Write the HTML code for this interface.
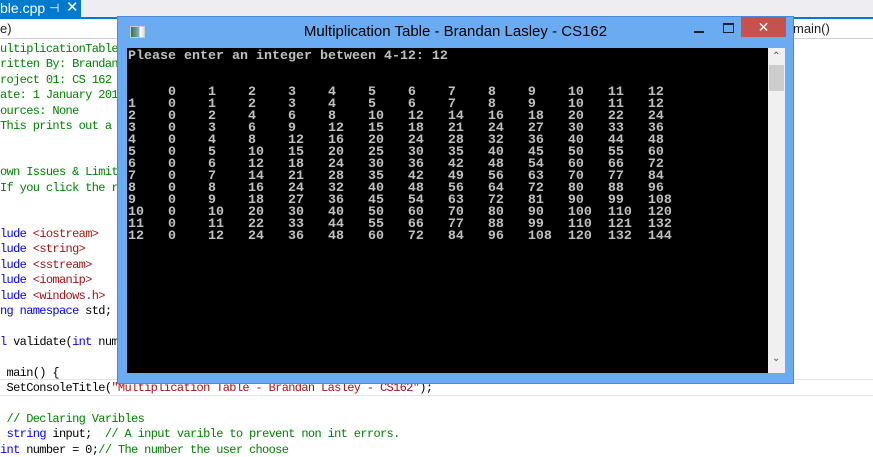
<!DOCTYPE html>
<html><head><meta charset="utf-8"><style>
*{margin:0;padding:0}
body{width:873px;height:449px;overflow:hidden;background:#fff;position:relative;font-family:"Liberation Sans",sans-serif}
.top{position:absolute;left:0;top:0;width:873px;height:17px;background:#eeeef2}
.tab{position:absolute;left:0;top:0;width:81px;height:18px;background:#007acc;color:#fff;font-size:14px;line-height:17px}
.bl{position:absolute;left:0;top:17px;width:873px;height:2px;background:#007acc}
.dd{position:absolute;top:19px;height:19px;border-bottom:1px solid #ccced8;font-size:13px;line-height:19px;color:#1e1e1e}
.code{position:absolute;left:0;font-family:"Liberation Mono",monospace;font-size:12px;letter-spacing:-0.65px;white-space:pre;line-height:14px;color:#000}
.g{color:#008000}.b{color:#0000ff}.r{color:#a31515}
.win{position:absolute;left:117px;top:16px;width:675px;height:366px;background:#6aabf2;border:1px solid #4a8ad8}
.con{position:absolute;left:9px;top:31px;width:641px;height:325px;background:#000;overflow:hidden}
.con pre{font-family:"Liberation Mono",monospace;font-weight:bold;font-size:13.33px;line-height:12px;color:#c0c0c0;margin:3px 0 0 1px}
.sb{position:absolute;left:650px;top:31px;width:17px;height:325px;background:#f0f0f0}
</style></head><body>
<div class="top"></div>
<div class="tab"><span style="position:absolute;left:0;top:0">ble.cpp</span><span style="position:absolute;left:49px;top:0;font-size:12px">⊣</span><span style="position:absolute;left:66px;top:-1px;font-size:15px">✕</span></div>
<div class="bl"></div>
<div class="dd" style="left:0;width:117px;border-right:1px solid #ccced8">e)</div>
<div class="dd" style="left:793px;width:80px;border-top:1px solid #007acc;top:18px">main()</div>

<div class="code g" style="top:42px">ultiplicationTable</div>
<div class="code g" style="top:57px">ritten By: Brandan</div>
<div class="code g" style="top:73px">roject 01: CS 162 </div>
<div class="code g" style="top:88px">ate: 1 January 2014</div>
<div class="code g" style="top:104px">ources: None</div>
<div class="code g" style="top:119px">This prints out a </div>
<div class="code g" style="top:165px">own Issues &amp; Limit</div>
<div class="code g" style="top:181px">If you click the r</div>
<div class="code" style="top:227px"><span class="b">lude</span> <span class="r">&lt;iostream&gt;</span></div>
<div class="code" style="top:242px"><span class="b">lude</span> <span class="r">&lt;string&gt;</span></div>
<div class="code" style="top:258px"><span class="b">lude</span> <span class="r">&lt;sstream&gt;</span></div>
<div class="code" style="top:273px"><span class="b">lude</span> <span class="r">&lt;iomanip&gt;</span></div>
<div class="code" style="top:289px"><span class="b">lude</span> <span class="r">&lt;windows.h&gt;</span></div>
<div class="code" style="top:304px"><span class="b">ng namespace</span> std;</div>
<div class="code" style="top:335px"><span class="b">l</span> validate(<span class="b">int</span> num</div>
<div class="code" style="top:366px"> main() {</div>
<div style="position:absolute;left:0;top:379px;width:873px;height:15px;border-top:1px solid #e4e4e4;border-bottom:1px solid #e4e4e4"></div>
<div class="code" style="top:381px"> SetConsoleTitle(<span class="r">"Multiplication Table - Brandan Lasley - CS162"</span>);</div>
<div class="code g" style="top:412px"> // Declaring Varibles</div>
<div class="code" style="top:427px"> <span class="b">string</span> input;  <span class="g">// A input varible to prevent non int errors.</span></div>
<div class="code" style="top:443px"><span class="b">int</span> number = 0;<span class="g">// The number the user choose</span></div>

<div class="win">
<div style="position:absolute;left:12px;top:9px;width:13px;height:10px;background:linear-gradient(90deg,#2e7a4c,#8ab 60%,#fff 70%,#ddd);border:1px solid #ccc"></div>
<div style="position:absolute;left:0;width:675px;top:6px;text-align:center;font-size:15px;color:#000">Multiplication Table - Brandan Lasley - CS162</div>
<div style="position:absolute;left:576px;top:14px;width:10px;height:2px;background:#222"></div>
<div style="position:absolute;left:605px;top:6px;width:9px;height:7px;border:1px solid #222;border-top-width:2px"></div>
<div style="position:absolute;left:623px;top:0;width:45px;height:20px;background:#c75050;color:#fff;text-align:center;font-size:14px;line-height:20px">✕</div>
<div class="con"><pre>Please enter an integer between 4-12: 12


     0    1    2    3    4    5    6    7    8    9    10   11   12
1    0    1    2    3    4    5    6    7    8    9    10   11   12
2    0    2    4    6    8    10   12   14   16   18   20   22   24
3    0    3    6    9    12   15   18   21   24   27   30   33   36
4    0    4    8    12   16   20   24   28   32   36   40   44   48
5    0    5    10   15   20   25   30   35   40   45   50   55   60
6    0    6    12   18   24   30   36   42   48   54   60   66   72
7    0    7    14   21   28   35   42   49   56   63   70   77   84
8    0    8    16   24   32   40   48   56   64   72   80   88   96
9    0    9    18   27   36   45   54   63   72   81   90   99   108
10   0    10   20   30   40   50   60   70   80   90   100  110  120
11   0    11   22   33   44   55   66   77   88   99   110  121  132
12   0    12   24   36   48   60   72   84   96   108  120  132  144</pre></div>
<div class="sb">
<div style="position:absolute;left:4px;top:3px;font-size:10px;color:#555">&#8963;</div>
<div style="position:absolute;left:1px;top:17px;width:15px;height:26px;background:#cdcdcd"></div>
<div style="position:absolute;left:4px;top:305px;font-size:10px;color:#555">&#8964;</div>
</div>
</div>
</body></html>
